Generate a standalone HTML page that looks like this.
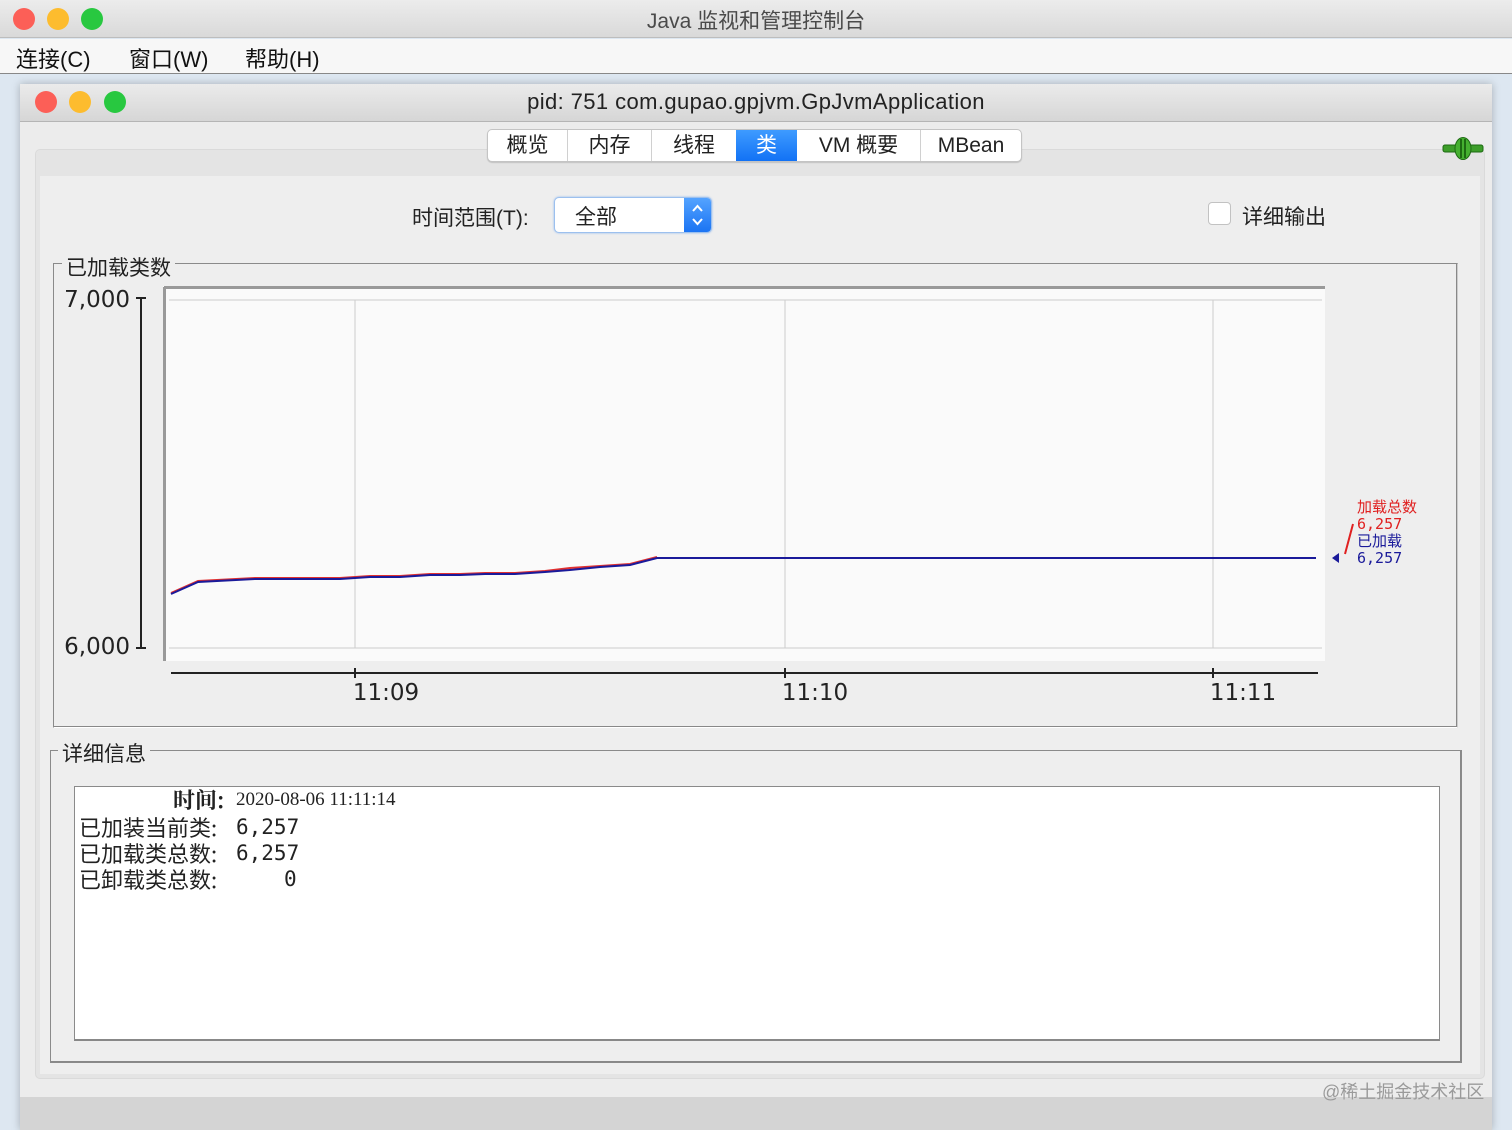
<!DOCTYPE html>
<html><head><meta charset="utf-8"><style>
*{margin:0;padding:0;box-sizing:border-box}
body{width:1512px;height:1130px;position:relative;overflow:hidden;background:#dde7f1;font-family:"Liberation Sans","Noto Sans CJK SC",sans-serif;color:#222}
.a{position:absolute;white-space:nowrap}
.dot{position:absolute;width:22px;height:22px;border-radius:50%}
.m{font-family:"DejaVu Sans Mono",monospace;font-size:21px}
.c{font-family:"Noto Sans CJK SC",sans-serif;font-size:22px}
</style></head><body>
<div class="a" style="left:0;top:0;width:1512px;height:38px;background:linear-gradient(#ececec,#d9d9d9);border-bottom:1px solid #bdbdbd"></div>
<div class="dot" style="left:13px;top:8px;background:#fc5f57"></div>
<div class="dot" style="left:47px;top:8px;background:#fdbc2e"></div>
<div class="dot" style="left:81px;top:8px;background:#28c840"></div>
<div class="a" style="left:0;top:5px;width:1512px;text-align:center;font-size:21px;color:#4a4a4a">Java 监视和管理控制台</div>
<div class="a" style="left:0;top:39px;width:1512px;height:35px;background:#f7f7f7;border-bottom:1px solid #888"></div>
<div class="a" style="left:16px;top:42px;font-size:22px;color:#111">连接(C)</div>
<div class="a" style="left:129px;top:42px;font-size:22px;color:#111">窗口(W)</div>
<div class="a" style="left:245px;top:42px;font-size:22px;color:#111">帮助(H)</div>

<div class="a" style="left:20px;top:84px;width:1472px;height:1046px;background:#ececec;box-shadow:0 0 8px rgba(0,0,0,.25)"></div>
<div class="a" style="left:20px;top:84px;width:1472px;height:38px;background:linear-gradient(#ebebeb,#d6d6d6);border-bottom:1px solid #b5b5b5"></div>
<div class="dot" style="left:35px;top:91px;background:#fc5f57"></div>
<div class="dot" style="left:69px;top:91px;background:#fdbc2e"></div>
<div class="dot" style="left:104px;top:91px;background:#28c840"></div>
<div class="a" style="left:20px;top:89px;width:1472px;text-align:center;font-size:22px;color:#222;letter-spacing:0.4px">pid: 751 com.gupao.gpjvm.GpJvmApplication</div>
<div class="a" style="left:20px;top:1097px;width:1472px;height:33px;background:#d4d4d4"></div>

<div class="a" style="left:35px;top:149px;width:1450px;height:930px;background:#e4e4e4;border:1px solid #dadada;border-radius:5px"></div>
<div class="a" style="left:40px;top:176px;width:1440px;height:898px;background:#eeeeee"></div>

<div class="a" style="left:487px;top:129px;width:535px;height:33px;background:#fff;border:1px solid #c4c4c4;border-radius:5px;box-shadow:0 1px 1px rgba(0,0,0,.15);display:flex;font-size:21px;overflow:hidden">
<div style="width:80px;text-align:center;line-height:31px;border-right:1px solid #d0d0d0">概览</div>
<div style="width:84px;text-align:center;line-height:31px;border-right:1px solid #d0d0d0">内存</div>
<div style="width:84px;text-align:center;line-height:31px">线程</div>
<div style="width:61px;text-align:center;line-height:31px;background:linear-gradient(#3e9bff,#1272f5);color:#fff">类</div>
<div style="width:124px;text-align:center;line-height:31px;border-right:1px solid #d0d0d0">VM 概要</div>
<div style="flex:1;text-align:center;line-height:31px">MBean</div>
</div>

<svg class="a" style="left:1442px;top:136px" width="42" height="26" viewBox="0 0 42 26"><rect x="1" y="9" width="40" height="7" rx="2" fill="#3d9e2a" stroke="#1d6a12"/><ellipse cx="21" cy="12.5" rx="8" ry="11" fill="#45b030" stroke="#1d6a12"/><line x1="19" y1="3" x2="19" y2="22" stroke="#1d6a12" stroke-width="2"/><line x1="23" y1="3" x2="23" y2="22" stroke="#1d6a12" stroke-width="2"/></svg>

<div class="a" style="left:412px;top:202px;font-size:21px">时间范围(T):</div>
<div class="a" style="left:554px;top:197px;width:158px;height:36px;background:#fff;border:1px solid #9cc0ee;border-radius:5px;box-shadow:0 0 2px #8fb7f0"></div>
<div class="a" style="left:575px;top:201px;font-size:21px">全部</div>
<div class="a" style="left:684px;top:198px;width:27px;height:34px;background:linear-gradient(#54a3ff,#1b74f3);border-radius:0 4px 4px 0"></div>
<svg class="a" style="left:684px;top:198px" width="27" height="34"><polyline points="9,13 13.5,8 18,13" fill="none" stroke="#fff" stroke-width="2"/><polyline points="9,21 13.5,26 18,21" fill="none" stroke="#fff" stroke-width="2"/></svg>
<div class="a" style="left:1208px;top:202px;width:23px;height:23px;background:#fff;border:1px solid #c2c2c2;border-radius:4px"></div>
<div class="a" style="left:1242px;top:201px;font-size:21px">详细输出</div>

<div class="a" style="left:53px;top:263px;width:1405px;height:465px;border:1px solid #8a8a8a;border-right-color:#ccc;border-bottom-color:#fff;box-shadow:inset -1px -1px 0 #888"></div>
<div class="a" style="left:62px;top:252px;background:#eeeeee;padding:0 4px;font-size:21px">已加载类数</div>
<div class="a" style="left:50px;top:750px;width:1412px;height:313px;border:1px solid #8a8a8a;box-shadow:inset -1px -1px 0 #888"></div>
<div class="a" style="left:58px;top:738px;background:#eeeeee;padding:0 4px;font-size:21px">详细信息</div>

<svg class="a" style="left:0;top:0" width="1512" height="1130">
<rect x="163" y="286" width="1162" height="375" fill="#fafafa"/>
<line x1="164" y1="287.5" x2="1325" y2="287.5" stroke="#999" stroke-width="3"/>
<line x1="164.5" y1="287" x2="164.5" y2="661" stroke="#999" stroke-width="3"/>
<line x1="169" y1="300" x2="1322" y2="300" stroke="#ccc"/>
<line x1="169" y1="648" x2="1322" y2="648" stroke="#ccc"/>
<line x1="355" y1="300" x2="355" y2="648" stroke="#ccc"/>
<line x1="785" y1="300" x2="785" y2="648" stroke="#ccc"/>
<line x1="1213" y1="300" x2="1213" y2="648" stroke="#ccc"/>
<line x1="141" y1="298" x2="141" y2="648" stroke="#222" stroke-width="2"/>
<line x1="136" y1="298" x2="146" y2="298" stroke="#222" stroke-width="2"/>
<line x1="136" y1="648" x2="146" y2="648" stroke="#222" stroke-width="2"/>
<line x1="171" y1="673" x2="1318" y2="673" stroke="#222" stroke-width="2"/>
<line x1="355" y1="668" x2="355" y2="678" stroke="#222" stroke-width="2"/>
<line x1="785" y1="668" x2="785" y2="678" stroke="#222" stroke-width="2"/>
<line x1="1213" y1="668" x2="1213" y2="678" stroke="#222" stroke-width="2"/>
<polyline fill="none" stroke="#e03030" stroke-width="2" points="171,593 198,581 255,578 340,578 370,576 400,576 430,574 460,574 485,573 515,573 545,571 570,568 600,566 630,564 657,557"/>
<polyline fill="none" stroke="#1a1a9a" stroke-width="2" points="171,594 198,582 255,579 340,579 370,577 400,577 430,575 460,575 485,574 515,574 545,572 570,570 600,567 630,565 657,558 1316,558"/>
<polygon points="1332,558 1339,553 1339,563" fill="#1a1a9a"/>
<line x1="1345" y1="554" x2="1353" y2="524" stroke="#e02020" stroke-width="2"/>
<g font-size="23" fill="#222" font-family="DejaVu Sans,sans-serif">
<text x="130" y="307" text-anchor="end">7,000</text>
<text x="130" y="654" text-anchor="end">6,000</text>
<text x="386" y="700" text-anchor="middle">11:09</text>
<text x="815" y="700" text-anchor="middle">11:10</text>
<text x="1243" y="700" text-anchor="middle">11:11</text>
</g>
<g font-size="15" font-family="DejaVu Sans Mono,Noto Sans CJK SC,monospace">
<text x="1357" y="512" fill="#e02020">加载总数</text>
<text x="1357" y="529" fill="#e02020">6,257</text>
<text x="1357" y="546" fill="#1a1a9a">已加载</text>
<text x="1357" y="563" fill="#1a1a9a">6,257</text>
</g>
</svg>

<div class="a" style="left:74px;top:786px;width:1366px;height:255px;background:#fff;border:1px solid #8a8a8a;border-bottom:2px solid #888"></div>
<div class="a c" style="left:173px;top:784px;font-weight:bold;font-family:'Noto Serif CJK SC',serif">时间:</div>
<div class="a" style="left:236px;top:789px;font-size:19px;font-family:'Liberation Serif',serif">2020-08-06 11:11:14</div>
<div class="a c" style="left:79px;top:811px">已加装当前类:</div>
<div class="a c" style="left:79px;top:837px">已加载类总数:</div>
<div class="a c" style="left:79px;top:863px">已卸载类总数:</div>
<div class="a m" style="left:236px;top:815px">6,257</div>
<div class="a m" style="left:236px;top:841px">6,257</div>
<div class="a m" style="left:284px;top:867px">0</div>
<div class="a" style="left:1322px;top:1078px;font-size:18px;color:#9a9a9a">@稀土掘金技术社区</div>
</body></html>
